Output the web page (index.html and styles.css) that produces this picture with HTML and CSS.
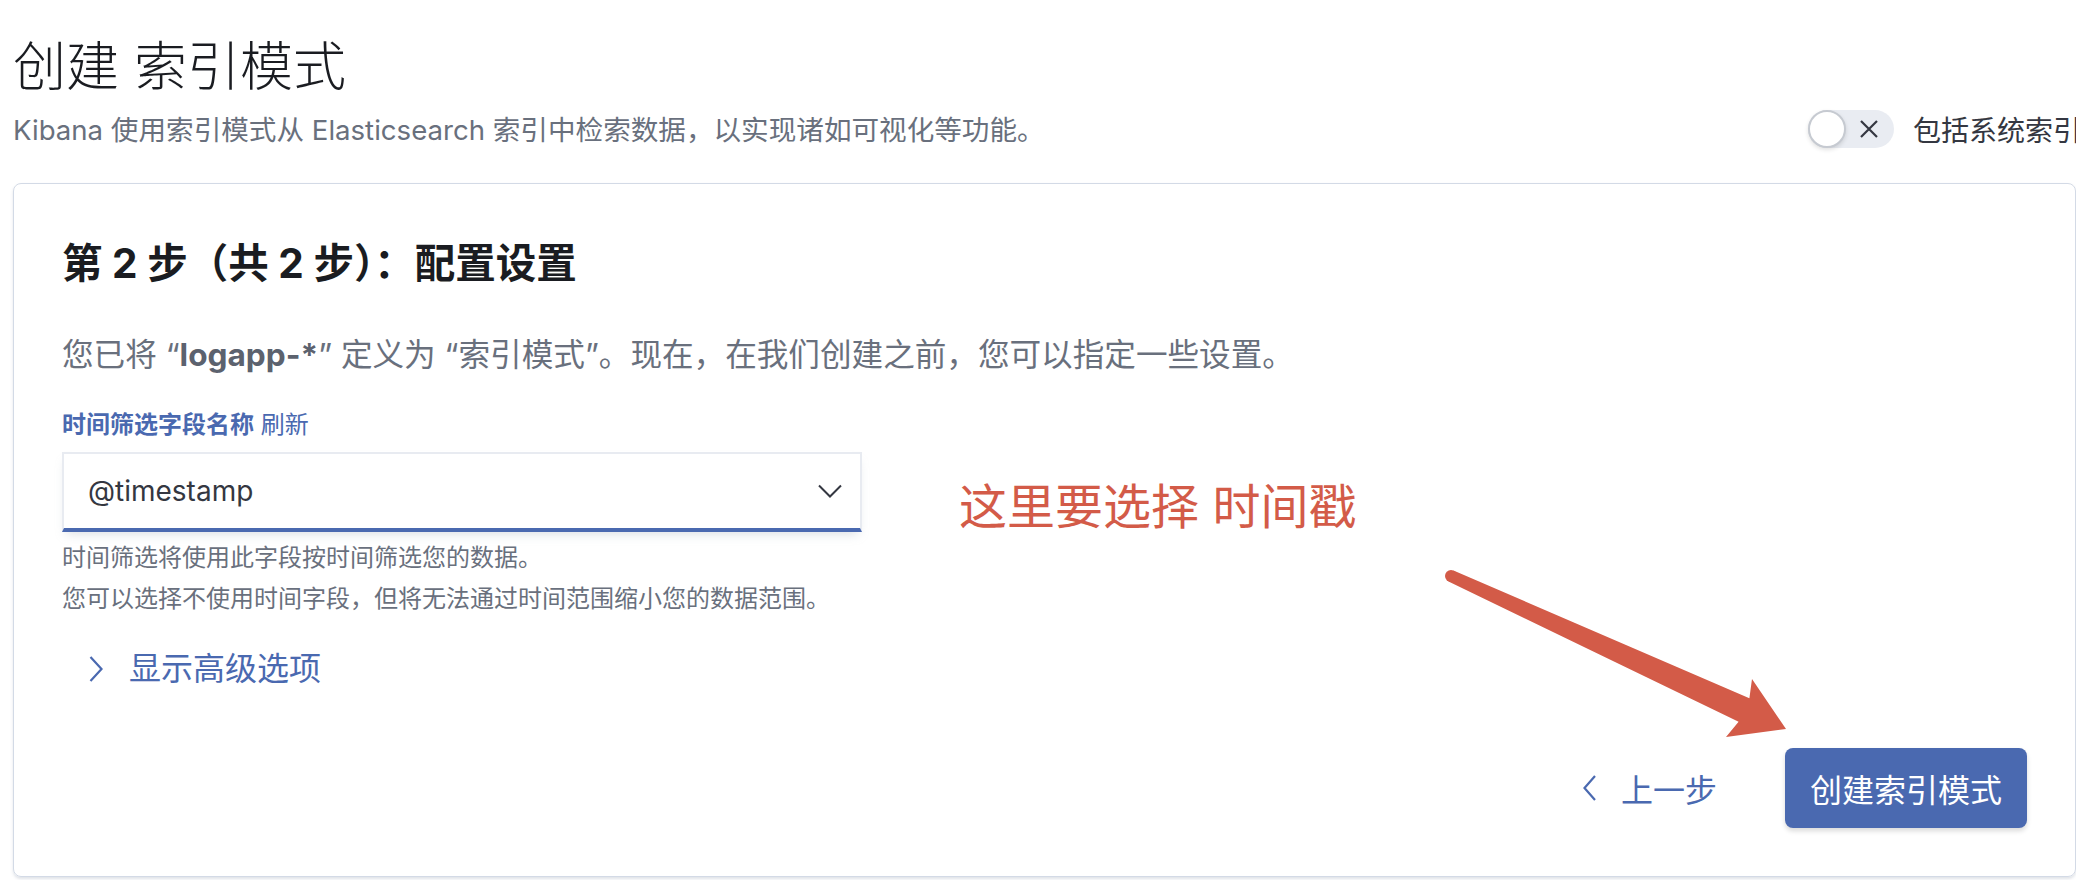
FILE: index.html
```html
<!DOCTYPE html>
<html lang="zh-CN">
<head>
    <meta charset="UTF-8">
    <meta name="viewport" content="width=device-width, initial-scale=1.0">
    <title>创建索引模式</title>
    <link rel="stylesheet" href="styles.css">
</head>
<body>
    <div class="page">
        <header class="page-header">
            <div class="header-text">
                <h1 class="page-title">创建 索引模式</h1>
                <p class="page-subtitle">Kibana 使用索引模式从 Elasticsearch 索引中检索数据，以实现诸如可视化等功能。</p>
            </div>
            <label class="system-toggle">
                <span class="switch">
                    <span class="knob"></span>
                    <svg class="switch-x" viewBox="0 0 20 20"><path d="M2 2 L18 18 M18 2 L2 18"/></svg>
                </span>
                <span class="toggle-label">包括系统索引</span>
            </label>
        </header>

        <section class="panel">
            <h2 class="step-title">第 2 步（共 2 步）：配置设置</h2>
            <p class="step-desc">您已将 “<b>logapp-*</b>” 定义为 “索引模式”。现在，在我们创建之前，您可以指定一些设置。</p>

            <div class="form-row">
                <div class="form-label"><span class="label-main">时间筛选字段名称</span> <span class="label-link">刷新</span></div>
                <div class="select">
                    <span>@timestamp</span>
                    <svg class="select-arrow" viewBox="0 0 24 14"><path d="M1 1.5 L12 12.5 L23 1.5"/></svg>
                </div>
                <div class="help">
                    <div>时间筛选将使用此字段按时间筛选您的数据。</div>
                    <div>您可以选择不使用时间字段，但将无法通过时间范围缩小您的数据范围。</div>
                </div>
            </div>

            <button class="advanced">
                <svg class="chev" viewBox="0 0 14 26"><path d="M1.5 1 L12.5 13 L1.5 25"/></svg>
                <span>显示高级选项</span>
            </button>

            <div class="actions">
                <button class="back">
                    <svg class="chev" viewBox="0 0 14 26"><path d="M12 1 L1.5 13 L12 25"/></svg>
                    <span>上一步</span>
                </button>
                <button class="primary">创建索引模式</button>
            </div>
        </section>

        <!-- annotation drawn over the screenshot -->
        <div class="note">这里要选择 时间戳</div>
        <svg class="arrow" viewBox="0 0 2076 880">
            <circle cx="1451" cy="576" r="6"/>
            <polygon points="1453.5,570.5 1749.4,698.2 1752,679 1786,729 1726,737 1738.6,721.8 1448.5,581.5"/>
        </svg>
    </div>
</body>
</html>
```

FILE: styles.css
```css
* {
    box-sizing: border-box;
}
body {
    margin: 0;
    background: #fff;
    font-family: Inter, "Noto Sans CJK SC", sans-serif;
    color: #343741;
    overflow: hidden;
}
.page {
    position: relative;
    width: 2076px;
    height: 880px;
    padding: 35px 0 0 13px;
}
.page-header {
    display: flex;
    align-items: flex-end;
    justify-content: space-between;
}
.page-title {
    margin: 0;
    font-size: 53px;
    line-height: 64px;
    font-weight: 300;
    color: #1a1c21;
}
.page-subtitle {
    margin: 13px 0 0;
    font-size: 27.6px;
    line-height: 36px;
    color: #69707d;
}
.system-toggle {
    display: flex;
    align-items: center;
    gap: 19px;
    margin-right: -5px;
    margin-bottom: -1px;
    white-space: nowrap;
}
.switch {
    position: relative;
    display: flex;
    align-items: center;
    width: 86px;
    height: 38px;
    border-radius: 19px;
    background: #e9ecf2;
}
.knob {
    width: 38px;
    height: 38px;
    border-radius: 50%;
    background: #fff;
    border: 2px solid #c6cad1;
    box-shadow: 0 2px 4px rgba(0, 0, 0, 0.12);
}
.switch-x {
    width: 20px;
    height: 20px;
    margin-left: 13px;
    fill: none;
    stroke: #343741;
    stroke-width: 2.2;
}
.toggle-label {
    font-size: 28px;
    color: #343741;
}
.panel {
    margin-top: 35px;
    height: 694px;
    border: 1px solid #d3dae6;
    border-radius: 8px;
    box-shadow: 0 2px 3px rgba(152, 162, 179, 0.3);
    padding: 48px;
    display: flex;
    flex-direction: column;
}
.step-title {
    margin: 8px 0 0;
    font-size: 40.5px;
    line-height: 48px;
    font-weight: 700;
    color: #1a1c21;
}
.step-desc {
    margin: 43px 0 0;
    font-size: 31.6px;
    line-height: 48px;
    color: #69707d;
}
.step-desc b {
    color: #5c626e;
}
.form-row {
    margin-top: 30px;
    width: 800px;
}
.form-label {
    font-size: 24px;
    line-height: 32px;
    color: #4a69b0;
}
.label-main {
    font-weight: 700;
}
.select {
    margin-top: 11px;
    height: 80px;
    display: flex;
    align-items: center;
    justify-content: space-between;
    padding: 0 18px 0 24px;
    background: #fff;
    border: 2px solid #e8ebf1;
    border-bottom: 4px solid #4a69b0;
    box-shadow: 0 6px 10px -4px rgba(152, 162, 179, 0.35);
    font-size: 28px;
    color: #343741;
}
.select-arrow {
    width: 24px;
    height: 14px;
    fill: none;
    stroke: #343741;
    stroke-width: 2;
}
.help {
    margin-top: 5px;
    font-size: 24px;
    line-height: 41px;
    color: #69707d;
}
button {
    font-family: inherit;
    border: none;
    background: none;
    padding: 0;
    cursor: pointer;
}
.advanced {
    align-self: flex-start;
    margin: 26px 0 0 27px;
    display: flex;
    align-items: center;
    gap: 26px;
    font-size: 32px;
    line-height: 48px;
    color: #4a69b0;
}
.chev {
    width: 14px;
    height: 26px;
    fill: none;
    stroke: #4a69b0;
    stroke-width: 2.2;
}
.actions {
    margin-top: auto;
    display: flex;
    justify-content: flex-end;
    align-items: center;
    gap: 68px;
}
.back {
    display: flex;
    align-items: center;
    gap: 24px;
    font-size: 32px;
    color: #4a69b0;
}
.primary {
    height: 80px;
    padding: 0 25px;
    border-radius: 8px;
    background: #4a69b0;
    color: #fff;
    font-size: 32px;
    box-shadow: 0 3px 5px rgba(0, 0, 0, 0.15);
}
.note {
    position: absolute;
    left: 959px;
    top: 483px;
    font-size: 48px;
    line-height: 1;
    color: #d35b48;
}
.arrow {
    position: absolute;
    left: 0;
    top: 0;
    width: 2076px;
    height: 880px;
    fill: #d35b48;
    pointer-events: none;
}
```
